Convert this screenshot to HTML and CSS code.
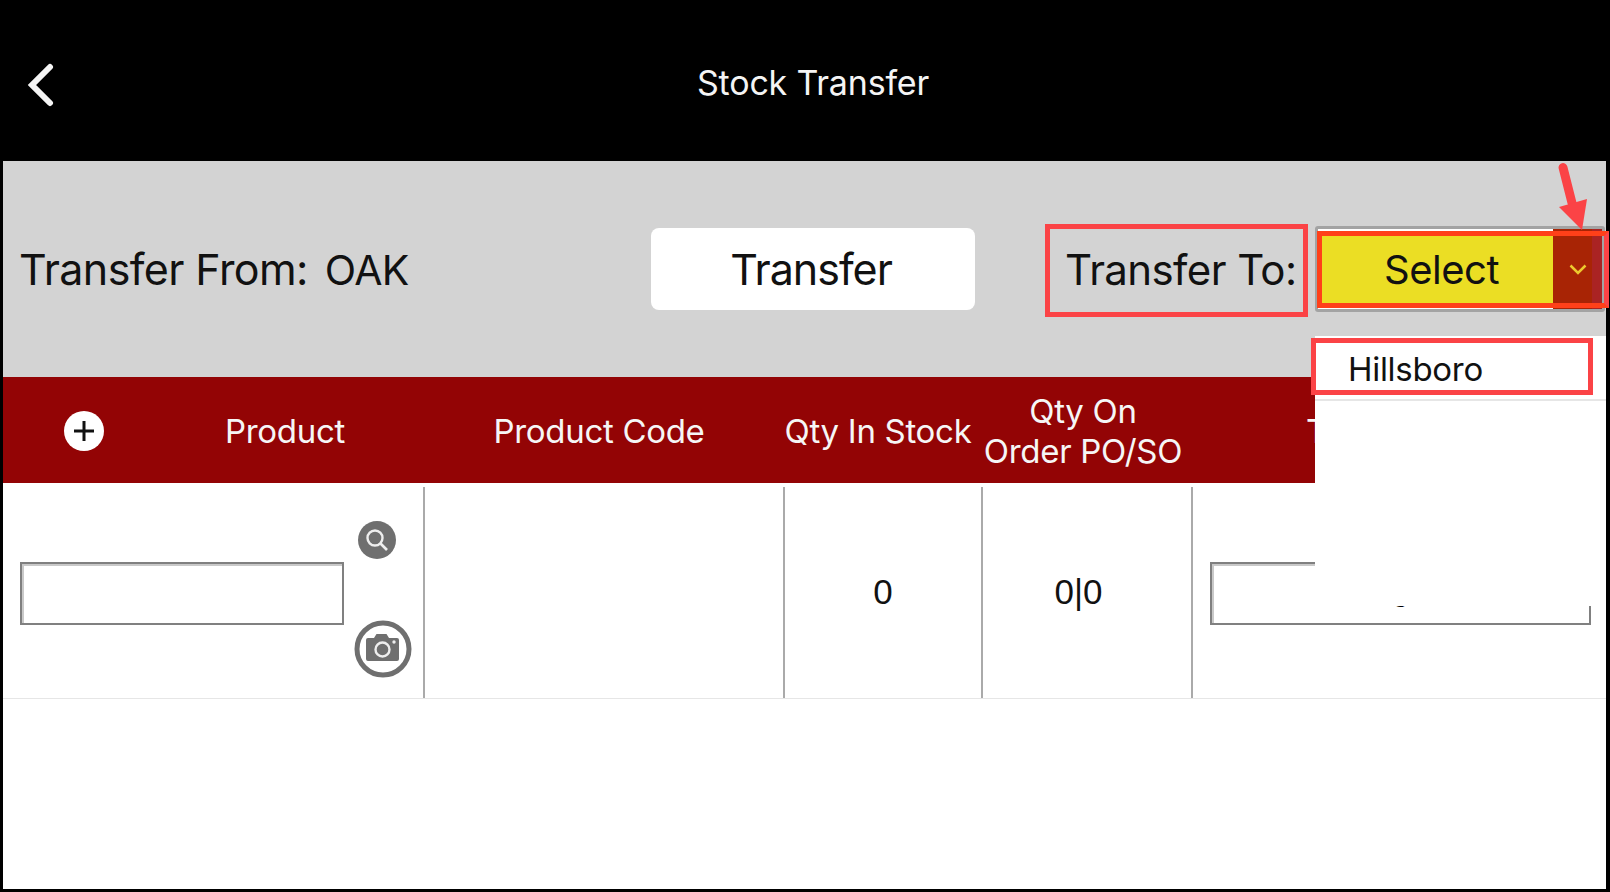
FILE: index.html
```html
<!DOCTYPE html>
<html lang="en">
<head>
<meta charset="utf-8">
<title>Stock Transfer</title>
<link rel="stylesheet" href="styles.css">
</head>
<body>
<div class="app">
  <header class="topbar">
    <svg class="back" width="28" height="44" viewBox="0 0 28 44" aria-hidden="true"><path d="M24 4 L6 22 L24 40" fill="none" stroke="#f5f5f5" stroke-width="6" stroke-linecap="round" stroke-linejoin="miter"/></svg>
    <h1 class="title">Stock Transfer</h1>
  </header>

  <section class="toolbar">
    <div class="from"><span class="from-label">Transfer From:</span><span class="from-value">OAK</span></div>
    <button class="transfer-btn">Transfer</button>
    <div class="to-label">Transfer To:</div>
    <div class="select">
      <div class="select-value">Select</div>
      <div class="select-arrow">
        <svg width="18" height="11" viewBox="0 0 18 11" aria-hidden="true"><path d="M1.500 1.500 L9 9 L16.500 1.500" fill="none" stroke="#ecc92e" stroke-width="2.500"/></svg>
      </div>
    </div>
  </section>

  <div class="table">
    <div class="thead">
      <div class="th th-add">
        <svg width="40" height="40" viewBox="0 0 40 40" aria-hidden="true"><circle cx="20" cy="20" r="20" fill="#fff"/><path d="M20 10 V30 M10 20 H30" stroke="#111" stroke-width="3"/></svg>
      </div>
      <div class="th th-product">Product</div>
      <div class="th th-code">Product Code</div>
      <div class="th th-stock">Qty In Stock</div>
      <div class="th th-order">Qty On<br>Order PO/SO</div>
      <div class="th th-qty">Transfer Qty</div>
    </div>
    <div class="row">
      <div class="cell cell-product">
        <input class="field field-product" type="text" aria-label="Product">
        <div class="tools">
          <svg class="tool-search" width="38" height="38" viewBox="0 0 38 38" aria-hidden="true"><circle cx="19" cy="19" r="19" fill="#6f6f6f"/><circle cx="17" cy="17" r="7.500" fill="none" stroke="#eee" stroke-width="2.400"/><path d="M22.500 22.500 L29 29" stroke="#eee" stroke-width="2.600"/></svg>
          <svg class="tool-camera" width="58" height="58" viewBox="0 0 58 58" aria-hidden="true"><circle cx="29" cy="29" r="26" fill="#fff" stroke="#6f6f6f" stroke-width="5"/><path d="M12 20 Q12 18 14 18 H20 L22.500 14 H32.500 L35 18 H43 Q45 18 45 20 V39 Q45 41 43 41 H14 Q12 41 12 39 Z" fill="#6f6f6f"/><circle cx="28.500" cy="29.500" r="7" fill="#6f6f6f" stroke="#eee" stroke-width="2.400"/><circle cx="40" cy="22" r="1.700" fill="#eee"/></svg>
        </div>
      </div>
      <div class="cell"></div>
      <div class="cell cell-num">0</div>
      <div class="cell cell-num cell-ratio">0|0</div>
      <div class="cell cell-qty"><input class="field field-qty" type="text" value="0" aria-label="Transfer quantity"></div>
    </div>
  </div>

  <div class="dropdown">
    <div class="dropdown-item">Hillsboro</div>
  </div>

  <div class="mark mark-to"></div>
  <div class="mark mark-select"></div>
  <div class="mark mark-item"></div>
  <svg class="mark-arrow" width="40" height="72" viewBox="0 0 40 72" aria-hidden="true"><path d="M8 6.500 L17 42" fill="none" stroke="#fb4346" stroke-width="9" stroke-linecap="round"/><path d="M4 46 L32 38 L27 69 Z" fill="#fb4346"/></svg>
</div>
</body>
</html>
```

FILE: styles.css
```css
* { box-sizing: border-box; }
html, body { margin: 0; height: 100%; }
body { background: #000; font-family: Inter, "Liberation Sans", sans-serif; color: #111; overflow: hidden; }

.app { position: relative; width: 1610px; height: 892px; display: flex; flex-direction: column; padding: 0 4px 3px 3px; }

.topbar { flex: 0 0 161px; background: #000; display: flex; align-items: center; justify-content: center; position: relative; }
.back { position: absolute; left: 23px; top: 63px; }
.title { margin: 3px 0 0 17px; font-size: 34px; font-weight: 400; color: #f4f4f4; letter-spacing: -0.2px; }

.toolbar { flex: 0 0 216px; background: #d3d3d3; display: flex; align-items: center; padding-left: 16px; }
.from { flex: 0 0 632px; display: flex; align-items: baseline; gap: 17px; font-size: 43px; letter-spacing: -0.6px; }
.from-value { font-size: 41px; }
.transfer-btn { flex: 0 0 324px; height: 82px; padding: 0 4px 0 0; background: #fff; border: 0; border-radius: 8px; font: inherit; font-size: 43px; letter-spacing: -1px; color: #111; }
.to-label { flex: 0 0 250px; margin-left: 90px; font-size: 42px; letter-spacing: -0.6px; white-space: nowrap; }
.select { flex: 0 0 290px; height: 86px; display: flex; border: 3px solid #a3a3a3; border-radius: 3px; background: #fff; padding: 2px 0; }
.select-value { flex: 1; background: #ebde24; display: flex; align-items: center; justify-content: center; font-size: 40px; letter-spacing: -0.5px; padding-left: 12px; }
.select-arrow { flex: 0 0 49px; margin: -2px 0; background: linear-gradient(to right, #a82405 39px, #aa2323 39px); display: flex; align-items: center; justify-content: center; }

.table { flex: 1; background: #fff; }
.thead { height: 106px; background: #930405; color: #f6f6f6; display: grid; grid-template-columns: 162px 260px 360px 198px 210px 413px; align-items: center; font-size: 33px; letter-spacing: -0.3px; padding-top: 1px; }
.th { text-align: center; line-height: 40px; white-space: nowrap; }
.th-add { display: flex; padding-left: 61px; }
.th-product { margin-left: -20px; }
.th-code { margin-left: -12px; }
.th-stock { margin-left: -12px; }
.th-order { margin-left: -10px; }
.th-qty { margin-left: 4px; }

.row { height: 216px; display: grid; grid-template-columns: 422px 360px 198px 210px 413px; padding-top: 4px; border-bottom: 1px solid #e6e6e6; background: #fff; }
.cell { border-right: 2px solid #aaa; display: flex; align-items: center; }
.cell:last-child { border-right: 0; }
.cell-num { justify-content: center; font-family: "Liberation Sans", sans-serif; font-size: 35px; padding-bottom: 2px; }
.cell-ratio { padding-right: 17px; }
.cell-product { padding-left: 17px; }
.cell-qty { padding-left: 17px; }

.field { height: 63px; margin-top: 2px; border: 2px solid #808080; box-shadow: inset 2px 2px 0 #c9c9c9; background: #fff; font-family: "Liberation Sans", sans-serif; font-size: 35px; text-align: center; padding: 3px 0 0; color: #000; border-radius: 0; }
.field-product { width: 324px; }
.field-qty { width: 381px; }

.tools { flex: 1; align-self: stretch; display: flex; flex-direction: column; align-items: flex-start; padding: 34px 0 0 14px; gap: 61px; }
.tool-camera { margin-left: -4px; }

.dropdown { position: absolute; left: 1315px; top: 336px; width: 291px; height: 270px; background: #fff; font-size: 33px; letter-spacing: -0.3px; }
.dropdown-item { height: 65px; padding: 2px 0 0 33px; display: flex; align-items: center; border-bottom: 2px solid #e6e6e6; }

.mark { position: absolute; border: 5px solid #fb4346; }
.mark-to { left: 1045px; top: 224px; width: 263px; height: 93px; }
.mark-select { left: 1317px; top: 231px; width: 292px; height: 77px; border-color: #ff4019; border-right-color: #fb4346; }
.mark-item { left: 1311px; top: 338px; width: 282px; height: 57px; }
.mark-arrow { position: absolute; left: 1555px; top: 161px; }
```
